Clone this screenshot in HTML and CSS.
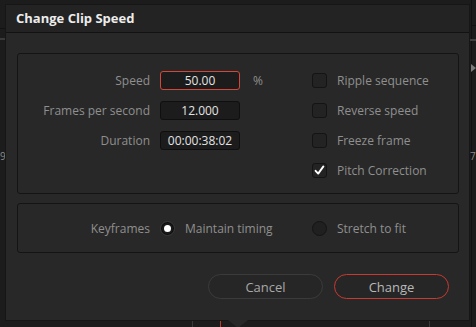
FILE: index.html
```html
<!DOCTYPE html>
<html>
<head>
<meta charset="utf-8">
<link rel="stylesheet" href="styles.css">
</head>
<body>
<div class="backdrop">
  <div class="bg-line bg-l1"></div>
  <div class="bg-line bg-l2"></div>
  <div class="bg-line bg-r1"></div>
  <div class="bg-line bg-r2"></div>
  <div class="bg-line bg-r3"></div>
  <div class="bg-line bg-b1"></div>
  <div class="bg-line bg-b2"></div>
  <div class="bg-line bg-b3"></div>
  <span class="bg-text bg-t1">9:</span>
  <span class="bg-text bg-t2">7</span>
  <div class="bg-tri"></div>

  <div class="dialog">
    <div class="titlebar">Change Clip Speed</div>
    <div class="body">
      <div class="group speed-group">
        <span class="label">Speed</span>
        <div class="field field-active">50.00</div>
        <span class="unit">%</span>
        <span class="check"></span>
        <span class="opt">Ripple sequence</span>

        <span class="label">Frames per second</span>
        <div class="field">12.000</div>
        <span></span>
        <span class="check"></span>
        <span class="opt">Reverse speed</span>

        <span class="label">Duration</span>
        <div class="field">00:00:38:02</div>
        <span></span>
        <span class="check"></span>
        <span class="opt">Freeze frame</span>

        <span></span>
        <span></span>
        <span></span>
        <span class="check checked">
          <svg width="13" height="13" viewBox="0 0 13 13"><path d="M2.6 6.8 L5.2 9.6 L10.4 2.4" fill="none" stroke="#ffffff" stroke-width="1.9" stroke-linecap="round" stroke-linejoin="round"/></svg>
        </span>
        <span class="opt">Pitch Correction</span>
      </div>

      <div class="group key-group">
        <span class="label">Keyframes</span>
        <span class="radio on"></span>
        <span class="opt">Maintain timing</span>
        <span class="radio"></span>
        <span class="opt">Stretch to fit</span>
      </div>

      <div class="actions">
        <button class="btn">Cancel</button>
        <button class="btn btn-primary">Change</button>
      </div>
    </div>
    <div class="notch"></div>
  </div>
</div>
</body>
</html>
```

FILE: styles.css
```css
html, body {
  margin: 0;
  padding: 0;
  background: #1c1c1c;
  font-family: "Open Sans", "Noto Sans", sans-serif;
}

.backdrop {
  position: relative;
  width: 476px;
  height: 327px;
  overflow: hidden;
  padding: 5px 7px 0 6px;
  box-sizing: border-box;
}

.bg-line { position: absolute; }
.bg-l1 { left: 0; top: 28px; width: 6px; height: 1px; background: #121212; }
.bg-l2 { left: 0; top: 38px; width: 6px; height: 2px; background: #3a3a3a; }
.bg-r1 { left: 471px; top: 0; width: 1px; height: 327px; background: #121212; }
.bg-r2 { left: 472px; top: 25px; width: 4px; height: 1px; background: #121212; }
.bg-r3 { left: 470px; top: 39px; width: 6px; height: 2px; background: #404040; }
.bg-b1 { left: 192px; top: 318px; width: 1px; height: 9px; background: #3a3a3a; }
.bg-b2 { left: 220px; top: 318px; width: 1px; height: 9px; background: #c0392b; }
.bg-b3 { left: 429px; top: 318px; width: 1px; height: 9px; background: #3a3a3a; }
.bg-text {
  position: absolute;
  color: #8a8a8a;
  font-size: 10px;
  line-height: 12px;
}
.bg-t1 { left: 0; top: 150px; }
.bg-t2 { left: 470px; top: 150px; }
.bg-tri {
  position: absolute;
  left: 471px;
  top: 64px;
  width: 0;
  height: 0;
  border-top: 4px solid transparent;
  border-bottom: 4px solid transparent;
  border-left: 5px solid #7a7a7a;
}

.dialog {
  position: relative;
  width: 463px;
  height: 315px;
  background: #282828;
  box-shadow: 0 0 0 1px #161616;
  display: flex;
  flex-direction: column;
}

.titlebar {
  height: 28px;
  box-sizing: border-box;
  background: #232323;
  border-bottom: 1px solid #121212;
  color: #ececec;
  font-weight: 700;
  font-size: 13px;
  line-height: 27px;
  padding-left: 10px;
}

.body {
  flex: 1;
  padding: 20px 10px 0 11px;
  display: flex;
  flex-direction: column;
}

.group {
  border: 1px solid #141414;
  border-radius: 3px;
  display: grid;
  column-gap: 10px;
  align-items: center;
}

.speed-group {
  height: 141px;
  box-sizing: border-box;
  grid-template-columns: 132px 80px 52px 15px 1fr;
  grid-template-rows: repeat(4, 30px);
  padding-top: 11px;
}

.key-group {
  margin-top: 9px;
  height: 50px;
  box-sizing: border-box;
  grid-template-columns: 132px 15px 117px 15px 1fr;
  grid-template-rows: 48px;
}

.label {
  text-align: right;
  color: #8f8f8f;
  font-size: 12px;
  white-space: nowrap;
}

.opt {
  color: #8f8f8f;
  font-size: 12px;
  white-space: nowrap;
}

.unit {
  color: #8f8f8f;
  font-size: 12px;
  padding-left: 3px;
}

.field {
  height: 19px;
  box-sizing: border-box;
  background: #1c1c1c;
  border: 1px solid #0f0f0f;
  border-radius: 3px;
  color: #e4e4e4;
  font-size: 12px;
  line-height: 17px;
  text-align: center;
}

.field-active {
  border-color: #d3473b;
}

.check {
  width: 15px;
  height: 15px;
  box-sizing: border-box;
  background: #232323;
  border: 1px solid #141414;
  border-radius: 3px;
  display: flex;
  align-items: center;
  justify-content: center;
}

.radio {
  width: 15px;
  height: 15px;
  box-sizing: border-box;
  border-radius: 50%;
  background: #202020;
  border: 1px solid #141414;
  display: flex;
  align-items: center;
  justify-content: center;
}

.radio.on {
  background: #1a1a1a;
  border: 1px solid #3a3a3a;
  box-shadow: inset 0 0 0 1px #0c0c0c;
}

.radio.on::after {
  content: "";
  width: 7px;
  height: 7px;
  border-radius: 50%;
  background: #ffffff;
}

.actions {
  margin-top: 21px;
  display: flex;
  justify-content: flex-end;
  gap: 11px;
  padding-right: 10px;
}

.btn {
  width: 115px;
  height: 25px;
  box-sizing: border-box;
  border-radius: 13px;
  background: #262626;
  border: 1px solid #3b3b3b;
  color: #a8a8a8;
  font-family: "Open Sans", "Noto Sans", sans-serif;
  font-size: 13px;
  line-height: 22px;
  padding: 0;
}

.btn-primary {
  border-color: #c8392f;
  color: #b8b8b8;
}

.notch {
  position: absolute;
  left: 222px;
  top: 315px;
  width: 0;
  height: 0;
  border-left: 10px solid transparent;
  border-right: 10px solid transparent;
  border-top: 8px solid #282828;
}
```
